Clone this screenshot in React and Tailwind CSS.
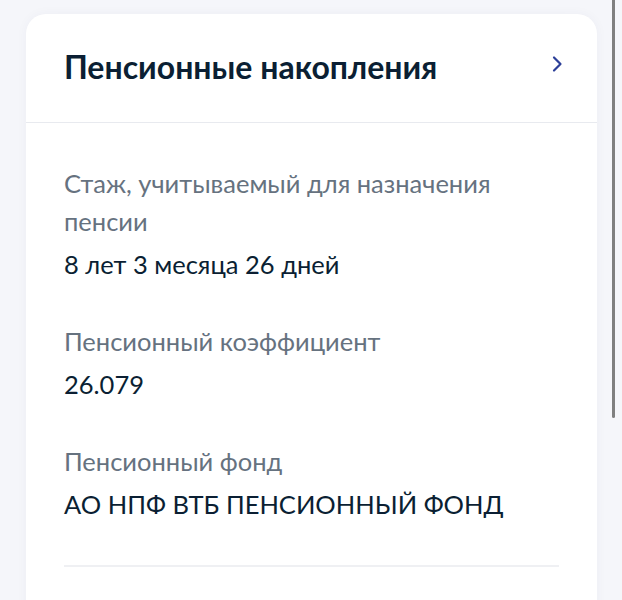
import React from "react";

const rows = [
  { label: "Стаж, учитываемый для назначения пенсии", value: "8 лет 3 месяца 26 дней" },
  { label: "Пенсионный коэффициент", value: "26.079" },
  { label: "Пенсионный фонд", value: "АО НПФ ВТБ ПЕНСИОННЫЙ ФОНД" },
];

const PensionCard = () => {
  return (
    <div className="relative h-[600px] overflow-hidden bg-[#f5f6fa] pt-[14px] pl-[26px] pr-[25px] font-['Lato','Noto_Sans',sans-serif]">
      <div className="rounded-t-[20px] bg-white shadow-[0_0_12px_rgba(30,40,90,0.04)]">
        <div className="flex h-[109px] items-center justify-between border-b border-[#e8eaef] pl-[38px] pr-[34px]">
          <h2 className="text-[32px] font-bold text-[#0b1f33] mt-[-2px]">Пенсионные накопления</h2>
          <svg width="12" height="18" viewBox="0 0 12 18" fill="none" className="mt-[-9px]">
            <path d="M3 2.5l6.5 6.5-6.5 6.5" stroke="#2c3f98" strokeWidth="2.2" strokeLinecap="round" strokeLinejoin="round" />
          </svg>
        </div>
        <div className="px-[38px] pt-[41px]">
          {rows.map((row, i) => (
            <div key={row.label} className={i > 0 ? "mt-[39px]" : ""}>
              <div className="text-[25.5px] leading-[38px] text-[#66727f] pr-[40px]">{row.label}</div>
              <div className="mt-[5px] text-[25.5px] leading-[38px] text-[#0b1f33]">{row.value}</div>
            </div>
          ))}
          <div className="mt-[42px] h-[2px] bg-[#eff0f3]" />
          <div className="h-[60px]" />
        </div>
      </div>
      <div className="absolute right-[7px] top-0 h-[418px] w-[3px] rounded-b-full bg-[#808080]" />
    </div>
  );
};

export default function App() {
  return <PensionCard />;
}
